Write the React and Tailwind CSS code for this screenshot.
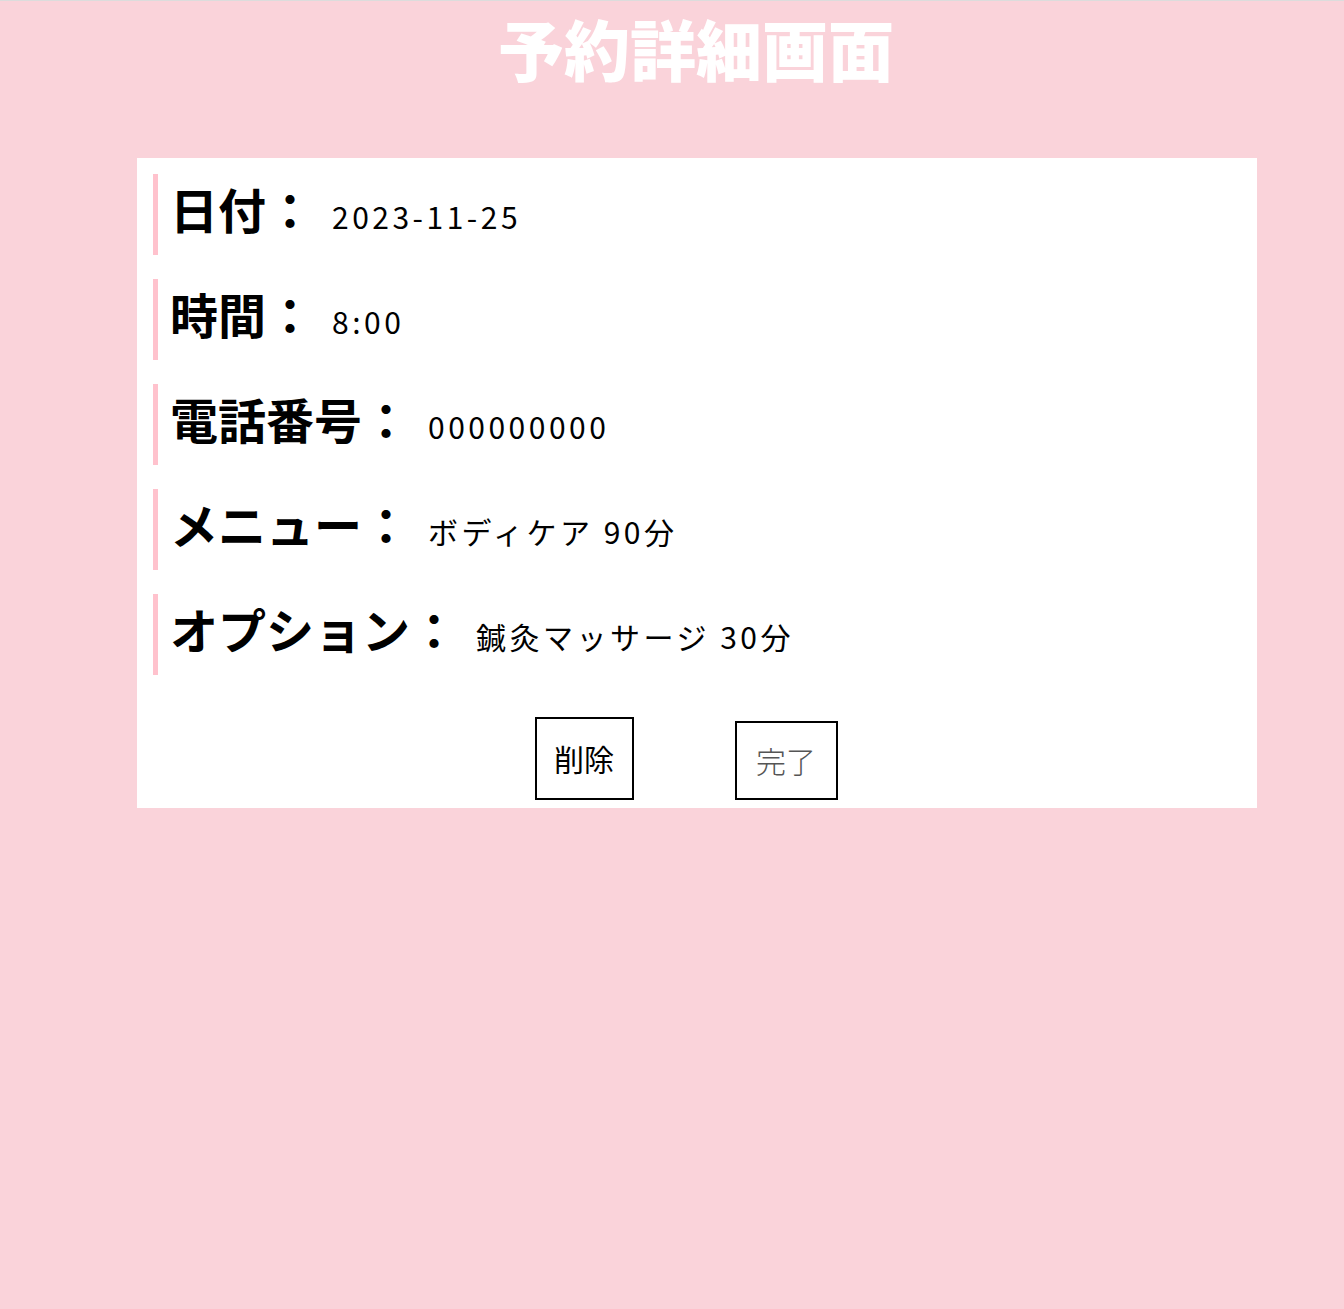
import React from 'react'

const rows = [
  { label: '日付：', value: '2023-11-25' },
  { label: '時間：', value: '8:00' },
  { label: '電話番号：', value: '000000000' },
  { label: 'メニュー：', value: 'ボディケア 90分' },
  { label: 'オプション：', value: '鍼灸マッサージ 30分' },
]

const jp = { fontFamily: '"Noto Sans CJK JP", "Noto Sans", sans-serif' }

export default function App() {
  return (
    <div className="min-h-[1309px] bg-[#fad3da] border-t border-[#dcdcdc]" style={jp}>
      <h1 className="pt-[8px] pl-[48px] text-center text-[66px] font-black leading-[76px] text-white">
        予約詳細画面
      </h1>

      <div className="mt-[73px] ml-[137px] w-[1120px] bg-white pt-[16px] pb-[8px] pl-[16px]">
        <div className="flex flex-col gap-[24px]">
          {rows.map(r => (
            <div key={r.label} className="flex h-[81px] items-baseline border-l-[5px] border-[#ffc2cd] pl-[12px] pt-[4px]">
              <span className="text-[48px] font-bold leading-[60px] text-black">{r.label}</span>
              <span className="ml-[18px] text-[30px] tracking-[3.5px] text-black">{r.value}</span>
            </div>
          ))}
        </div>

        <div className="mt-[42px] flex items-end justify-center gap-[101px] pr-[38px]">
          <button className="h-[83px] w-[99px] border-2 border-black bg-white text-[30px] text-black">
            削除
          </button>
          <button className="h-[79px] w-[103px] border-2 border-black bg-white text-[30px] font-light text-[#555]">
            完了
          </button>
        </div>
      </div>
    </div>
  )
}
